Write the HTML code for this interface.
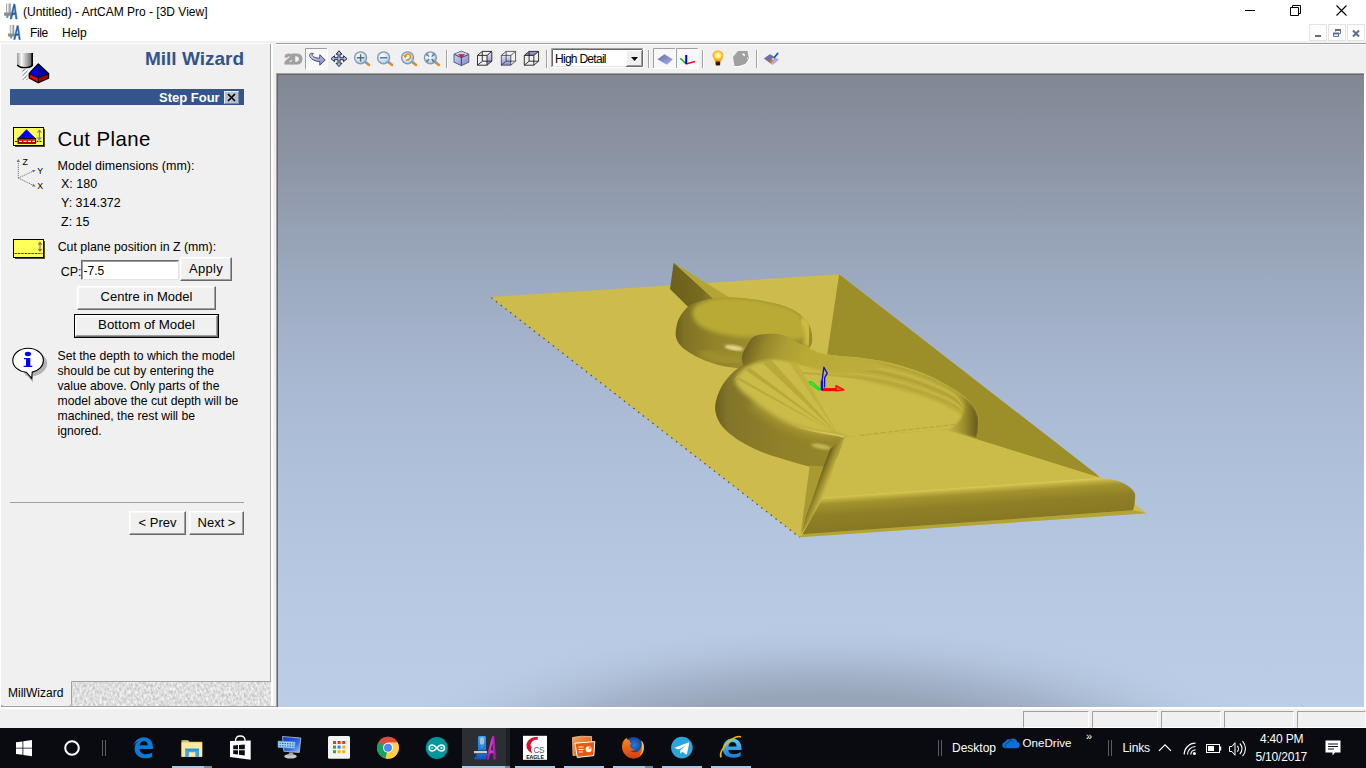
<!DOCTYPE html>
<html>
<head>
<meta charset="utf-8">
<title>(Untitled) - ArtCAM Pro - [3D View]</title>
<style>
*{box-sizing:border-box;margin:0;padding:0}
html,body{width:1366px;height:768px;overflow:hidden;background:#fff}
body{position:relative;font-family:"Liberation Sans",Arial,sans-serif;font-size:12px;color:#000}
.abs{position:absolute}
.t{position:absolute;white-space:nowrap;line-height:1}
/* title + menu */
#titlebar{left:0;top:0;width:1366px;height:22px;background:#fff}
#menubar{left:0;top:22px;width:1366px;height:21px;background:#fff}
.mdi{top:2px;width:18px;height:17px;border:1px solid #e3e3e3;background:#fdfdfd}
/* left panel */
#panel{left:0;top:43px;width:270px;height:664px;background:#f0f0f0}
#stepbar{left:10px;top:89px;width:234px;height:16px;background:#33558b}
.btn{position:absolute;background:#f0f0f0;border:1px solid;border-color:#fff #696969 #696969 #fff;box-shadow:inset -1px -1px 0 #a0a0a0,inset 1px 1px 0 #f8f8f8;font-size:13px;text-align:center;white-space:nowrap}
/* viewport */
#toolbar{left:271px;top:43px;width:1095px;height:31px;background:#f0f0f0}
#view{left:278px;top:75px;width:1086px;height:632px;background:linear-gradient(#828794 0%,#8c94a4 13%,#98a5b9 28%,#a1afc6 38%,#a8b8d1 48%,#aebfd9 60%,#b6c8e2 80%,#bccee7 100%);overflow:hidden}
#statusbar{left:0;top:709px;width:1366px;height:19px;background:#f0f0f0}
.sp{position:absolute;top:2px;height:17px;border:1px solid;border-color:#a0a0a0 #fff #fff #a0a0a0}
.ul{position:absolute;top:38px;height:2px;width:40px;background:#9dcdea}.ul2{position:absolute;top:38px;height:2px;width:8px;background:#6f8ea3}.w{color:#fff}
#taskbar{left:0;top:728px;width:1366px;height:40px;background:#090b10}
</style>
</head>
<body>

<!-- title bar -->
<div id="titlebar" class="abs">
<svg class="abs" style="left:3px;top:3px" width="17" height="17" viewBox="0 0 17 17">
<defs><linearGradient id="cy1" x1="0" x2="1"><stop offset="0" stop-color="#8a8a8a"/><stop offset=".35" stop-color="#f4f4f4"/><stop offset="1" stop-color="#7a7a7a"/></linearGradient></defs>
<rect x="3" y="0.500" width="4.600" height="9.500" fill="url(#cy1)"/>
<path d="M1 9.5h7v3.2h-2.2l-.8 2.3h-1.5l-.5-2.3h-2z" fill="#8c8c8c"/>
<path d="M7 16 L10.6 1.2 L12 1 L14.2 16 L12.6 16 L12.2 11.5 L9.6 12 L8.6 16z M10 10 L12 9.6 L11.2 4.4z" fill="#1f5da8" fill-rule="evenodd" stroke="#2a6ab8" stroke-width=".5"/>
</svg>
<div class="t" style="left:23px;top:6px;font-size:12px">(Untitled) - ArtCAM Pro - [3D View]</div>
<svg class="abs" style="left:1240px;top:0" width="126" height="22" viewBox="0 0 126 22" fill="none" stroke="#000" stroke-width="1">
<path d="M5 10.5h10"/>
<path d="M50.5 7.500h8v8h-8z"/><path d="M52.500 7.500v-2h8v8h-2"/>
<path d="M96.500 5.500l10 10M106.500 5.500l-10 10" stroke-width="1.1"/>
</svg>
</div>
<!-- menu bar -->
<div id="menubar" class="abs">
<svg class="abs" style="left:7px;top:2px" width="16" height="17" viewBox="0 0 17 17">
<rect x="3" y="0.500" width="4.600" height="9.500" fill="url(#cy1)"/>
<path d="M1 9.500h7v3.200h-2.200l-.8 2.300h-1.500l-.5-2.300h-2z" fill="#8c8c8c"/>
<path d="M7 16 L10.600 1.200 L12 1 L14.200 16 L12.600 16 L12.200 11.500 L9.600 12 L8.600 16z M10 10 L12 9.600 L11.200 4.400z" fill="#1f5da8" fill-rule="evenodd" stroke="#2a6ab8" stroke-width=".5"/>
</svg>
<div class="t" style="left:30px;top:5px;font-size:12px;letter-spacing:-.4px">File</div>
<div class="t" style="left:62px;top:5px;font-size:12px">Help</div>
<div class="abs mdi" style="left:1309px"><i style="left:5px;top:10px;width:6px;height:2px;background:#5d6f8a;position:absolute"></i></div>
<div class="abs mdi" style="left:1328px"><svg width="17" height="17" viewBox="0 0 17 17" fill="none" stroke="#5d6f8a"><path d="M6.500 6.500v-2h5v4h-1.500" stroke-width="1"/><path d="M6 5h6" stroke-width="2"/><path d="M4.500 8.500h5v3h-5z"/><path d="M4 8.500h6" stroke-width="2"/></svg></div>
<div class="abs mdi" style="left:1347px"><svg width="17" height="17" viewBox="0 0 17 17" fill="none" stroke="#5d6f8a" stroke-width="2"><path d="M5 5.500l6 6M11 5.500l-6 6"/></svg></div>
</div>

<!-- left panel -->
<div class="abs" style="left:0;top:41px;width:1366px;height:2px;background:#f0f0f0"></div>
<div id="panel" class="abs"></div>
<svg class="abs" style="left:14px;top:50px" width="40" height="36" viewBox="14 50 40 36">
<defs>
<linearGradient id="cyl" x1="0" x2="1"><stop offset="0" stop-color="#9a9a9a"/><stop offset=".28" stop-color="#fafafa"/><stop offset=".62" stop-color="#a8a8a8"/><stop offset=".9" stop-color="#6a6a6a"/><stop offset=".91" stop-color="#000"/><stop offset="1" stop-color="#000"/></linearGradient>
<pattern id="hat" width="3" height="3" patternUnits="userSpaceOnUse" patternTransform="rotate(-45)"><rect width="3" height="3" fill="#fff"/><rect width="3" height="1" fill="#8a8a8a"/></pattern>
</defs>
<path d="M17 53h16v12.500q-2 2.400-8 2.400t-8-2.400z" fill="url(#cyl)"/>
<path d="M17.300 65q2 2.600 7.700 2.600t7.700-2.600" fill="none" stroke="#000" stroke-width="1.300"/>
<rect x="22.500" y="69" width="5" height="11" fill="url(#hat)"/>
<path d="M38.300 64 L29.300 73.500 L29.300 78 L38.300 82.700 L48.500 78 L48.500 73.500z" fill="#000" stroke="#000" stroke-width="1.400" stroke-linejoin="round"/>
<path d="M38.300 64.600 L30 73.600 L38.300 77.400z" fill="#0000f0"/>
<path d="M38.300 64.600 L47.800 73.600 L38.300 77.400z" fill="#0000a0"/>
<path d="M30 74.600 L37.800 78.200 L37.800 82 L30 77.800z" fill="#f00000"/>
<path d="M38.800 78.200 L47.800 74.600 L47.800 77.800 L38.800 82z" fill="#a00000"/>
</svg>
<div class="t" style="left:100px;width:144px;text-align:right;top:49px;font-size:19px;font-weight:bold;color:#31548b">Mill Wizard</div>
<div id="stepbar" class="abs"></div>
<div class="t" style="left:159px;top:91px;font-size:13px;font-weight:bold;color:#fff">Step Four</div>
<div class="abs" style="left:224px;top:91px;width:15px;height:13px;background:#b3bfd3;border:1px solid;border-color:#e8ecf3 #7d8aa3 #7d8aa3 #e8ecf3"></div>
<svg class="abs" style="left:224px;top:91px" width="15" height="13" viewBox="0 0 15 13"><path d="M4 3l7 7M11 3l-7 7" stroke="#000" stroke-width="1.700" fill="none"/></svg>

<!-- cut plane icon -->
<svg class="abs" style="left:13px;top:127px" width="33" height="21" viewBox="13 127 33 21">
<rect x="15" y="129" width="30" height="18" fill="#4a4a4a"/>
<rect x="13.500" y="127.500" width="30" height="18" fill="#ffff5a" stroke="#000"/>
<path d="M26.500 129.300 L35.800 138.400 L17.700 138.400z" fill="#0000f8"/>
<rect x="18" y="138.400" width="17.600" height="4.800" fill="#f00" stroke="#000" stroke-width="1"/>
<path d="M15 141.400h2.500M36.500 141.400h6" stroke="#0000c0" stroke-width="1" stroke-dasharray="2 1"/>
<path d="M19 141.300h16" stroke="#fff" stroke-width="1.200" stroke-dasharray="3 1.500"/>
<path d="M39.400 131v8M37.400 132.600l2-2.400 2 2.400M37.400 137.400l2 2.400 2-2.400" stroke="#808080" stroke-width="1.100" fill="none"/>
</svg>
<div class="t" style="left:57.500px;top:129.400px;font-size:20.400px;letter-spacing:.4px">Cut Plane</div>
<!-- xyz icon -->
<svg class="abs" style="left:14px;top:156px" width="34" height="36" viewBox="14 156 34 36">
<g stroke="#777" stroke-width="1" fill="none" stroke-dasharray="1.200 0.800"><path d="M18.300 178V160M18.300 178L34.500 170.600M18.300 178L34.500 186"/></g>
<path d="M16.500 162l1.800-3 1.800 3zM32 170l3.800 0-2.600 2.600zM32 186.600l3.800 0-2.400-2.800z" fill="#777"/>
<g font-family="'Liberation Sans',Arial,sans-serif" font-size="8.800" fill="#000"><text x="22.500" y="164.800">Z</text><text x="37.300" y="173.800">Y</text><text x="37.300" y="188.600">X</text></g>
</svg>
<div class="t" style="left:57.600px;top:160.200px;font-size:12.500px">Model dimensions (mm):</div>
<div class="t" style="left:61px;top:178.200px;font-size:12.500px">X: 180</div>
<div class="t" style="left:61px;top:197.400px;font-size:12.500px">Y: 314.372</div>
<div class="t" style="left:61px;top:216.200px;font-size:12.500px">Z: 15</div>
<!-- yellow z icon -->
<svg class="abs" style="left:13px;top:239px" width="33" height="21" viewBox="13 239 33 21">
<rect x="15" y="241" width="30" height="18" fill="#4a4a4a"/>
<rect x="13.500" y="239.500" width="30" height="18" fill="#ffff5a" stroke="#000"/>
<path d="M14.500 253.500h28" stroke="#f00" stroke-width="1.100" stroke-dasharray="2.400 1"/>
<path d="M40 243v7.500M38.300 244.600l1.700-2.200 1.700 2.200M38.300 249l1.700 2.200 1.700-2.200" stroke="#707070" stroke-width="1.100" fill="none"/>
</svg>
<div class="t" style="left:57.700px;top:241.300px;font-size:12.350px">Cut plane position in Z (mm):</div>
<div class="t" style="left:60.700px;top:266.400px;font-size:12.500px">CP:</div>
<div class="abs" style="left:81px;top:260px;width:98px;height:20px;background:#fff;border:1px solid;border-color:#696969 #e3e3e3 #e3e3e3 #696969;box-shadow:inset 1px 1px 0 #a0a0a0"></div>
<div class="t" style="left:83.500px;top:265.300px;font-size:12px">-7.5</div>
<div class="btn" style="left:180px;top:257px;width:52px;height:24px"><span class="t" style="left:0;width:50px;top:3.600px;letter-spacing:.3px">Apply</span></div>
<div class="btn" style="left:77px;top:286px;width:139px;height:24px"><span class="t" style="left:0;width:137px;top:3.200px">Centre in Model</span></div>
<div class="abs" style="left:74px;top:314px;width:145px;height:24px;background:#000"></div>
<div class="btn" style="left:75px;top:315px;width:143px;height:22px"><span class="t" style="left:0;width:141px;top:2px;font-size:13.300px">Bottom of Model</span></div>
<!-- info icon -->
<svg class="abs" style="left:10px;top:345px" width="40" height="38" viewBox="10 345 40 38">
<defs><pattern id="sh" width="2" height="2" patternUnits="userSpaceOnUse"><rect width="2" height="2" fill="#f0f0f0"/><rect width="1" height="1" fill="#777"/><rect x="1" y="1" width="1" height="1" fill="#777"/></pattern></defs>
<path d="M30.200 349.800a15.300 12.200 0 0 1 10 21.400q-4.500 3.200-9 3.600v6.200l-5.500-6.500q-8-1.500 4.500-24.700z" fill="url(#sh)" transform="translate(1.800,1.600)"/>
<path d="M28.100 348.200c8.400 0 15.300 5.400 15.300 12.200c0 5.600-4.600 10.200-11.200 11.700l-0.500 6.300l-5.200-6c-7.800-.8-13.700-5.800-13.700-12c0-6.800 6.900-12.200 15.300-12.200z" fill="#fff" stroke="#000" stroke-width="1.100"/>
<ellipse cx="27.900" cy="354" rx="3.100" ry="2.200" fill="#0000ff"/>
<path d="M24 358h6.300v7.800h2v1.300h-8.700v-1.300h2.400v-6.500h-2z" fill="#0000ff"/>
</svg>
<div class="abs" style="left:57.500px;top:349.200px;width:200px;font-size:12.200px;line-height:15px">Set the depth to which the model<br>should be cut by entering the<br>value above. Only parts of the<br>model above the cut depth will be<br>machined, the rest will be<br>ignored.</div>
<div class="abs" style="left:10px;top:502px;width:234px;height:1px;background:#a0a0a0"></div>
<div class="btn" style="left:129px;top:511px;width:57px;height:24px"><span class="t" style="left:0;width:55px;top:3.600px">&lt; Prev</span></div>
<div class="btn" style="left:189px;top:511px;width:55px;height:24px"><span class="t" style="left:0;width:53px;top:3.600px">Next &gt;</span></div>
<!-- bottom tabs -->
<div class="abs" style="left:0;top:681px;width:271px;height:26px;background:#dadada"></div>
<svg class="abs" style="left:0;top:681px" width="271" height="27" viewBox="0 0 271 27">
<defs><filter id="nz" x="0" y="0" width="100%" height="100%" color-interpolation-filters="sRGB"><feTurbulence type="fractalNoise" baseFrequency="0.45 0.3" numOctaves="2" seed="7"/><feColorMatrix type="matrix" values="0.36 0 0 0 0.69  0.36 0 0 0 0.69  0.36 0 0 0 0.69  0 0 0 0 1"/></filter></defs>
<rect x="71" y="1" width="199" height="25" fill="#e9e9e9"/>
<rect x="71" y="1" width="200" height="25" filter="url(#nz)"/>
<path d="M71.500 0.500H270.500" stroke="#a0a0a0"/>
<path d="M0 0h71.500v22.500q0 3-3 3h-64.500q-3 0-4-3z" fill="#f0f0f0"/>
<path d="M71.500 0.500v22q0 3-3 3h-64.500q-3 0-3.500-2.500" fill="none" stroke="#a0a0a0"/>
<path d="M0 25.500H271" stroke="#a0a0a0"/>
</svg>
<div class="t" style="left:8px;top:686.600px;font-size:12px">MillWizard</div>
<div class="abs" style="left:270px;top:44px;width:1px;height:638px;background:#a0a0a0"></div>
<div class="abs" style="left:0;top:43px;width:270px;height:1px;background:#fff"></div>
<div class="abs" style="left:0;top:43px;width:1px;height:664px;background:#fff"></div>

<!-- toolbar -->
<div id="toolbar" class="abs"></div>
<div class="abs" style="left:276px;top:43px;width:1090px;height:1px;background:#a0a0a0"></div>
<div class="abs" style="left:276px;top:44px;width:1090px;height:1px;background:#fff"></div>
<div class="abs" style="left:271px;top:44px;width:2px;height:663px;background:#fff"></div><div class="abs" style="left:273px;top:44px;width:3px;height:663px;background:#f0f0f0"></div><div class="abs" style="left:270px;top:706px;width:8px;height:1px;background:#a0a0a0"></div>
<svg class="abs" style="left:276px;top:45px" width="520" height="28" viewBox="276 45 520 28">
<defs>
<linearGradient id="lav" x1="0" y1="0" x2="1" y2="1"><stop offset="0" stop-color="#d8dcf8"/><stop offset="1" stop-color="#8088c8"/></linearGradient>
<linearGradient id="lav2" x1="0" y1="0" x2="0" y2="1"><stop offset="0" stop-color="#e0e4fa"/><stop offset="1" stop-color="#8890d0"/></linearGradient>
<radialGradient id="lens" cx=".4" cy=".35" r=".7"><stop offset="0" stop-color="#ffffff"/><stop offset=".6" stop-color="#c8e4f4"/><stop offset="1" stop-color="#8fb8d8"/></radialGradient>
<radialGradient id="bulb" cx=".5" cy=".45" r=".55"><stop offset="0" stop-color="#fff"/><stop offset=".45" stop-color="#ffe860"/><stop offset="1" stop-color="#f49000"/></radialGradient>
<linearGradient id="dia" x1="0" y1="0" x2="1" y2="1"><stop offset="0" stop-color="#6070b0"/><stop offset="1" stop-color="#a8b0e0"/></linearGradient>
<g id="mag"><path d="M5.800 5l2.600 2.100" stroke="#e88a20" stroke-width="2.600" stroke-linecap="round"/><path d="M3.500 3.400l2.800 2.200" stroke="#8898a8" stroke-width="2.200"/><circle cx="0" cy="0" r="6" fill="url(#lens)" stroke="#8098b8" stroke-width="1.300"/></g>
</defs>
<!-- 2D disabled -->
<text x="284.500" y="64.400" font-family="'Liberation Sans',Arial,sans-serif" font-weight="bold" font-size="15.500" fill="#fff" letter-spacing="-1.800" stroke="#fff" stroke-width="1" transform="translate(1,0)">2D</text>
<text x="284.500" y="63.600" font-family="'Liberation Sans',Arial,sans-serif" font-weight="bold" font-size="15.500" fill="#a0a0a0" letter-spacing="-1.800" stroke="#a0a0a0" stroke-width="1.200">2D</text>
<!-- pressed rotate -->
<rect x="305" y="48" width="23" height="21.500" fill="#f8f8f8"/>
<path d="M305.500 69.500v-21h22.500" fill="none" stroke="#a0a0a0"/><path d="M305.500 69h22v-21" fill="none" stroke="#fff"/>
<path d="M311.800 53.200c-2 0-2.800 1.800-1.800 3.600c1.600 3 5.500 4.600 9.800 4.800v3.600l5.400-5.200l-5.400-5.300v3.500c-3.400 0-6.600-1-7.600-2.800c-.5-1 .2-1.800 1.200-1.700z" fill="url(#lav)" stroke="#384058" stroke-width=".9" stroke-linejoin="round"/>
<!-- pan -->
<path d="M339 50.800l3 3.400h-2v3.500h3.500v-2l3.500 3l-3.500 3v-2h-3.500v3.500h2l-3 3.400l-3-3.400h2v-3.500h-3.500v2l-3.500-3l3.500-3v2h3.500v-3.500h-2z" fill="#b0b6e6" stroke="#203040" stroke-width="1" stroke-linejoin="round"/>
<!-- zoom in -->
<use href="#mag" x="360.600" y="57.800"/><path d="M357 57.800h7.200M360.600 54.200v7.200" stroke="#606870" stroke-width="1.400"/>
<!-- zoom out -->
<use href="#mag" x="383.600" y="57.800"/><path d="M380 57.800h7.200" stroke="#606870" stroke-width="1.400"/>
<!-- zoom prev -->
<use href="#mag" x="407.600" y="57.800"/><path d="M405 56.500c.5-3 5-3.500 5.600-.5c.5 2.600-2.500 4.500-4.600 4" fill="none" stroke="#e09010" stroke-width="1.500"/><path d="M403.200 55l2 3.600l2.200-3z" fill="#e09010"/>
<!-- zoom fit -->
<use href="#mag" x="430.400" y="57.800"/><path d="M427 54.400l2.200 2.200M433.800 54.400l-2.200 2.200M427 61.200l2.200-2.200M433.800 61.200l-2.200-2.200" stroke="#687078" stroke-width="1.300"/><path d="M426.400 53.800h2.400l-2.400 2.400zM434.400 53.800h-2.400l2.400 2.400zM426.400 61.800h2.400l-2.400-2.400zM434.400 61.800h-2.400l2.400-2.400z" fill="#687078"/>
<path d="M446.500 50v18M546.500 50v18M648.500 50v18M702.500 50v18M756.500 50v18" stroke="#a0a0a0"/><path d="M447.500 50v18M547.500 50v18M649.500 50v18M703.500 50v18M757.500 50v18" stroke="#fff"/>
<!-- iso cube -->
<path d="M454 54.200l7.400-3.100l7.400 3.100v8l-7.400 3.400l-7.400-3.400z" fill="url(#lav)" stroke="#586088" stroke-width="1" stroke-linejoin="round"/>
<path d="M454.300 54.400l7.100 3.200l7.100-3.200l-7.100-3z" fill="#c8ccf0"/>
<path d="M458 54.200h7l-3.600 3.600z" fill="#f01020"/>
<path d="M461.400 57.600v7.800M454.200 54.400l7.200 3.200l7.200-3.200" fill="none" stroke="#303850" stroke-width=".9"/>
<!-- cube 2 right face -->
<path d="M487 55.400l4.800-4v9.800l-4.800 4z" fill="url(#lav2)"/>
<g fill="none" stroke="#202020" stroke-width=".9"><path d="M477.500 55.400h9.500v9.800h-9.500zM482.300 51.400h9.500v9.800h-9.500zM477.500 55.400l4.800-4M487 55.400l4.800-4M477.500 65.200l4.800-4M487 65.200l4.800-4"/></g>
<!-- cube 3 front face -->
<path d="M501.300 55.400h9.500v9.800h-9.500z" fill="url(#lav2)"/>
<g fill="none" stroke="#202020" stroke-width=".9"><path d="M501.300 55.400h9.500v9.800h-9.500zM506.100 51.400h9.500v9.800h-9.500zM501.300 55.400l4.800-4M510.800 55.400l4.800-4M501.300 65.200l4.800-4M510.800 65.200l4.800-4" opacity=".75"/></g>
<!-- cube 4 top face -->
<path d="M524.300 55.400l4.800-4h9.500l-4.800 4z" fill="url(#lav2)"/><path d="M524.300 55.400l4.800-4h9.500l-4.800 4z" fill="#5060a0" opacity=".45"/>
<g fill="none" stroke="#202020" stroke-width=".9"><path d="M524.300 55.400h9.500v9.800h-9.500zM529.100 51.400h9.500v9.800h-9.500zM524.300 55.400l4.800-4M533.800 55.400l4.800-4M524.300 65.200l4.800-4M533.800 65.200l4.800-4"/></g>
<!-- combo -->
<rect x="551" y="48" width="92.500" height="19.500" fill="#fff"/>
<path d="M551.500 67v-18.500h91.500" fill="none" stroke="#a0a0a0"/><path d="M552.500 66v-16.500h90" fill="none" stroke="#696969"/>
<path d="M551 67.500h92.500v-19.500" fill="none" stroke="#fff"/><path d="M552 66.500h90.500v-17" fill="none" stroke="#e3e3e3"/>
<rect x="626" y="50" width="16" height="16" fill="#f0f0f0"/>
<path d="M626.500 65.500v-15h15" fill="none" stroke="#fff"/><path d="M626 66.500h16.500v-16.500" fill="none" stroke="#696969"/><path d="M627 65.500h14.500v-14.500" fill="none" stroke="#a0a0a0"/>
<path d="M631 57h7l-3.500 4z" fill="#000"/>
<text x="555" y="62.700" font-family="'Liberation Sans',Arial,sans-serif" font-size="12" letter-spacing="-.72" fill="#000">High Detail</text>
<!-- pressed pair -->
<rect x="653" y="48" width="45" height="21" fill="#f8f8f8"/>
<path d="M653.500 69v-20.500h22M676.500 69v-20.500h21.500" fill="none" stroke="#a0a0a0"/><path d="M653 68.500h22.500v-20M676 68.500h22v-20" fill="none" stroke="#fff"/>
<path d="M657.400 59.200l7-5l8.500 5l-6 5.600z" fill="url(#dia)"/>
<path d="M680.200 58.300l6 5.600" stroke="#00c020" stroke-width="1.500"/><path d="M686 64l9-2.500" stroke="#f01010" stroke-width="1.500"/><path d="M686.200 55v9" stroke="#0000e0" stroke-width="2"/>
<!-- bulb -->
<path d="M718 50.600c3.200 0 5.400 2.300 5.400 5c0 2.400-1.800 3.400-2.400 5.600h-6c-.6-2.200-2.400-3.200-2.400-5.600c0-2.700 2.200-5 5.400-5z" fill="url(#bulb)"/>
<rect x="715.600" y="61.200" width="4.600" height="4.200" rx=".8" fill="#3a1000"/><rect x="715.600" y="61" width="4.600" height="1.200" fill="#b85000"/>
<!-- gray disabled -->
<path d="M738 51h9.500l1.500 7.500l-3.500 5.500l-6.500 2h-4.500l-1.500-9z" fill="#fff" transform="translate(1,1)"/>
<path d="M738 51h9.500l1.500 7.500l-3.500 5.500l-6.500 2h-4.500l-1.500-9z" fill="#a0a0a0"/>
<path d="M742.500 54.500l2 1.200l-.5-2zM747 58l1.500 1" stroke="#fff" stroke-width="1" fill="#fff"/>
<!-- brush -->
<path d="M764 58.600l6-4.400l9 5.500l-6.500 5.200z" fill="#a4acec"/><path d="M764 58.600l6-4.400l4.500 2.700l-5 5.500z" fill="#6872a8"/>
<path d="M777.700 53.400l-4.600 5.600" stroke="#1858d0" stroke-width="1.700" stroke-linecap="round"/><path d="M773.300 58.600l-3 3.600" stroke="#f07010" stroke-width="2.200" stroke-linecap="round"/><path d="M773.600 58.200l-1.200 1.500" stroke="#f8e0b0" stroke-width="1.600"/>
</svg>

<!-- viewport -->
<div class="abs" style="left:276px;top:73px;width:1089px;height:635px;background:#fff"></div>
<div class="abs" style="left:276px;top:73px;width:1088px;height:634px;background:#a0a0a0"></div>
<div class="abs" style="left:277px;top:74px;width:1087px;height:633px;background:#696969"></div>
<div id="view" class="abs">
<svg class="abs" style="left:0;top:0" width="1086" height="632" viewBox="278 75 1086 632">
<defs>
<radialGradient id="gsh" cx="826" cy="770" r="475" gradientUnits="userSpaceOnUse" gradientTransform="translate(0,770) scale(1,.316) translate(0,-770)"><stop offset="0" stop-color="#95a2b6" stop-opacity="1"/><stop offset=".5" stop-color="#96a3b7" stop-opacity=".95"/><stop offset=".64" stop-color="#9aa8bd" stop-opacity=".72"/><stop offset=".78" stop-color="#a2b1c8" stop-opacity=".4"/><stop offset=".9" stop-color="#acbcd4" stop-opacity=".13"/><stop offset=".98" stop-color="#b6c7e0" stop-opacity="0"/></radialGradient>
<linearGradient id="gfin" x1="672" y1="285" x2="712" y2="280" gradientUnits="userSpaceOnUse"><stop offset="0" stop-color="#6c601d"/><stop offset=".7" stop-color="#786b21"/><stop offset="1" stop-color="#93852a"/></linearGradient>
<linearGradient id="gw1" x1="676" y1="0" x2="745" y2="0" gradientUnits="userSpaceOnUse"><stop offset="0" stop-color="#6e621e"/><stop offset=".12" stop-color="#7f7225"/><stop offset=".55" stop-color="#918329"/><stop offset="1" stop-color="#9a8c2c"/></linearGradient>
<linearGradient id="gw2" x1="715" y1="0" x2="845" y2="0" gradientUnits="userSpaceOnUse"><stop offset="0" stop-color="#6a5f1d"/><stop offset=".1" stop-color="#82752a"/><stop offset=".5" stop-color="#8f8129"/><stop offset=".85" stop-color="#93852a"/><stop offset="1" stop-color="#9a8c2c"/></linearGradient>
<linearGradient id="gneck" x1="743" y1="352" x2="860" y2="393" gradientUnits="userSpaceOnUse"><stop offset="0" stop-color="#6c611e"/><stop offset=".05" stop-color="#7c6f23"/><stop offset=".15" stop-color="#96882b"/><stop offset=".3" stop-color="#ac9e33"/><stop offset=".5" stop-color="#b9aa35"/><stop offset=".8" stop-color="#bbac3a"/><stop offset="1" stop-color="#bcad3c"/></linearGradient>
<linearGradient id="gbev" x1="823" y1="497" x2="825.500" y2="533.500" gradientUnits="userSpaceOnUse"><stop offset="0" stop-color="#dccc5c"/><stop offset=".07" stop-color="#c4b444"/><stop offset=".2" stop-color="#a2932e"/><stop offset=".5" stop-color="#8f8027"/><stop offset="1" stop-color="#867823"/></linearGradient>
<linearGradient id="gfil" x1="821.500" y1="470" x2="832" y2="474.300" gradientUnits="userSpaceOnUse"><stop offset="0" stop-color="#5c5219"/><stop offset=".18" stop-color="#7d7023"/><stop offset=".5" stop-color="#9c8e2c"/><stop offset=".85" stop-color="#bcad3e"/><stop offset="1" stop-color="#c9b947"/></linearGradient>
<linearGradient id="grw" x1="950" y1="0" x2="979" y2="0" gradientUnits="userSpaceOnUse"><stop offset="0" stop-color="#c0b040"/><stop offset=".5" stop-color="#9a8c2c"/><stop offset="1" stop-color="#5e5419"/></linearGradient>
<linearGradient id="grim" x1="785" y1="0" x2="845" y2="0" gradientUnits="userSpaceOnUse"><stop offset="0" stop-color="#d8c85a" stop-opacity="0"/><stop offset=".5" stop-color="#d8c85a" stop-opacity=".8"/><stop offset="1" stop-color="#dccc5e"/></linearGradient>
</defs>
<rect x="278" y="590" width="1086" height="117" fill="url(#gsh)"/>
<!--MODEL-START-->
<defs><clipPath id="cbig"><path d="M745.0 363.5C743.0 365.0 736.6 368.8 732.9 372.4C729.1 376.0 725.2 380.6 722.5 385.0C719.8 389.4 717.7 394.7 716.5 399.0C715.3 403.3 714.9 406.9 715.3 410.6C715.7 414.4 717.3 418.3 719.0 421.5C720.7 424.7 722.6 427.0 725.4 429.8C728.2 432.6 732.1 435.8 736.0 438.5C739.9 441.2 744.3 443.6 748.8 445.9C753.3 448.2 758.1 450.6 763.0 452.5C767.9 454.4 772.9 456.0 778.1 457.6C783.3 459.2 788.8 460.8 794.0 462.3C799.2 463.8 804.1 465.5 809.3 466.4C814.5 467.3 822.4 467.4 825.0 467.6L836.7 458.6L844.9 437.1L945.6 429.5L976.9 438.4L976.9 438.4C977.2 436.6 978.5 431.4 978.6 427.5C978.7 423.6 979.0 419.2 977.7 415.0C976.4 410.8 974.4 406.7 970.6 402.5C966.8 398.3 962.8 394.8 955.0 390.0C947.2 385.2 934.2 378.0 923.8 373.6C913.4 369.2 902.9 366.0 892.5 363.4C882.1 360.8 870.0 359.2 861.3 358.0C852.5 356.8 846.8 356.8 840.0 356.0C833.2 355.2 824.0 353.8 820.8 353.4L800.0 345.0L760.0 345.0L745.0 363.5z"/></clipPath><filter id="b2" x="-10%" y="-10%" width="120%" height="120%"><feGaussianBlur stdDeviation="2.2"/></filter><filter id="b1" x="-10%" y="-10%" width="120%" height="120%"><feGaussianBlur stdDeviation="1.2"/></filter><filter id="b4" x="-20%" y="-20%" width="140%" height="140%"><feGaussianBlur stdDeviation="4"/></filter></defs>
<g id="model">
<path d="M490.9 297.1L839.1 274.3L1146.7 513.3L799.6 537.3z" fill="#cdbc4b"/>
<path d="M491.2 297.6L799.6 537.3" stroke="#5f5418" stroke-width="1.200" stroke-dasharray="1.600 4.400" fill="none"/>
<path d="M799.6 537.3L802.4 534.3L1133.0 510.3L1146.7 513.3z" fill="#b4a435"/>
<path d="M839.1 274.3L827.3 354.0L840.0 400.0L945.6 429.5L1099.4 477.6L1096.3 473.9z" fill="#9c8e29"/>
<path d="M673.700 262.800L670 288.900L688.200 306.900L713.200 298.500z" fill="url(#gfin)"/>
<path d="M673.700 262.800L713.200 298.500L729 297.200z" fill="#b3a434"/>
<clipPath id="csm"><path d="M688.3 306.6C691.7 304.0 695.9 302.7 700.0 301.3C704.1 299.9 708.5 299.1 713.2 298.5C717.9 297.9 723.2 297.6 728.0 297.5C732.8 297.4 736.5 297.6 742.2 298.1C747.9 298.7 755.4 299.6 762.0 300.8C768.6 302.0 776.1 303.5 781.8 305.3C787.5 307.1 792.0 309.1 796.0 311.5C800.0 313.9 803.1 317.1 805.5 319.8C807.9 322.6 809.4 325.1 810.5 328.0C811.6 330.9 812.2 333.9 812.2 337.0C812.2 340.1 812.7 343.5 810.2 346.8C807.7 350.1 803.7 353.8 797.0 357.0C790.3 360.2 778.2 364.1 770.0 366.0C761.8 367.9 753.6 368.2 748.0 368.5C742.4 368.8 741.2 368.4 736.4 367.9C731.6 367.3 725.4 366.8 719.3 365.2C713.1 363.6 705.6 361.0 699.5 358.0C693.4 355.0 686.3 350.8 682.4 347.4C678.5 344.0 677.1 341.0 676.1 337.6C675.1 334.2 675.8 330.4 676.4 327.0C677.0 323.6 677.8 320.5 679.8 317.1C681.8 313.7 684.9 309.2 688.3 306.6z"/></clipPath>
<path d="M688.3 306.6C691.7 304.0 695.9 302.7 700.0 301.3C704.1 299.9 708.5 299.1 713.2 298.5C717.9 297.9 723.2 297.6 728.0 297.5C732.8 297.4 736.5 297.6 742.2 298.1C747.9 298.7 755.4 299.6 762.0 300.8C768.6 302.0 776.1 303.5 781.8 305.3C787.5 307.1 792.0 309.1 796.0 311.5C800.0 313.9 803.1 317.1 805.5 319.8C807.9 322.6 809.4 325.1 810.5 328.0C811.6 330.9 812.2 333.9 812.2 337.0C812.2 340.1 812.7 343.5 810.2 346.8C807.7 350.1 803.7 353.8 797.0 357.0C790.3 360.2 778.2 364.1 770.0 366.0C761.8 367.9 753.6 368.2 748.0 368.5C742.4 368.8 741.2 368.4 736.4 367.9C731.6 367.3 725.4 366.8 719.3 365.2C713.1 363.6 705.6 361.0 699.5 358.0C693.4 355.0 686.3 350.8 682.4 347.4C678.5 344.0 677.1 341.0 676.1 337.6C675.1 334.2 675.8 330.4 676.4 327.0C677.0 323.6 677.8 320.5 679.8 317.1C681.8 313.7 684.9 309.2 688.3 306.6z" fill="url(#gw1)"/>
<g clip-path="url(#csm)"><path d="M696.0 305.5C697.8 304.1 701.1 302.6 704.0 301.5C706.9 300.4 709.2 299.2 713.2 298.6C717.2 298.0 723.2 297.7 728.0 297.6C732.8 297.5 736.5 297.6 742.2 298.2C747.9 298.8 755.4 299.7 762.0 300.9C768.6 302.1 776.3 303.7 781.8 305.4C787.3 307.1 791.4 309.0 795.0 311.3C798.6 313.6 801.4 316.5 803.5 319.3C805.6 322.1 807.0 325.3 807.5 328.0C808.0 330.7 808.1 333.6 806.5 335.5C804.9 337.4 802.4 339.0 798.0 339.5C793.6 340.0 786.0 339.1 780.0 338.6C774.0 338.1 767.8 336.8 762.0 336.5C756.2 336.2 750.8 337.2 745.0 337.0C739.2 336.8 732.7 336.0 727.0 335.0C721.3 334.0 715.7 332.7 711.0 331.0C706.3 329.3 702.0 327.3 699.0 325.0C696.0 322.7 694.0 319.5 693.0 317.0C692.0 314.5 692.5 311.9 693.0 310.0C693.5 308.1 694.2 306.9 696.0 305.5z" fill="#b9aa35" filter="url(#b2)"/>
<path d="M700 352Q722 362 742 361" stroke="#a89a30" stroke-width="9" fill="none" filter="url(#b4)" opacity=".8"/>
<ellipse cx="734" cy="347.800" rx="9.500" ry="2.600" fill="#e2d68e" filter="url(#b1)" transform="rotate(9 734 347.8)"/>
<path d="M802 318Q812 330 806 346" stroke="#d6c74a" stroke-width="6" fill="none" filter="url(#b2)" opacity=".95"/></g>
<g clip-path="url(#cbig)">
<rect x="700" y="340" width="300" height="140" fill="url(#gw2)"/>
<path d="M752.7 400.0C754.8 401.6 760.6 406.4 765.0 409.5C769.4 412.6 774.5 416.0 779.0 418.5C783.5 421.0 787.6 422.8 792.0 424.5C796.4 426.2 800.7 427.7 805.4 429.0C810.1 430.3 815.0 431.3 820.0 432.2C825.0 433.1 833.1 433.9 835.7 434.3" stroke="#a99b32" stroke-width="14" fill="none" filter="url(#b4)" opacity=".75"/>
<path d="M771.0 359.2C768.0 359.9 758.0 361.0 752.7 363.2C747.5 365.4 742.5 369.4 739.5 372.4C736.5 375.4 734.8 378.0 735.0 381.0C735.2 384.0 738.0 387.3 741.0 390.5C744.0 393.7 748.7 396.8 752.7 400.0C756.7 403.2 760.6 406.4 765.0 409.5C769.4 412.6 774.5 416.0 779.0 418.5C783.5 421.0 787.6 422.8 792.0 424.5C796.4 426.2 800.7 427.7 805.4 429.0C810.1 430.3 815.0 431.3 820.0 432.2C825.0 433.1 831.6 433.5 835.7 434.3C839.9 435.1 843.4 436.6 844.9 437.1L847.0 455.0L946.0 447.0L990.0 450.0L984.9 430.4C985.2 428.6 986.5 423.4 986.6 419.5C986.7 415.6 987.0 411.2 985.7 407.0C984.4 402.8 982.4 398.7 978.6 394.5C974.8 390.3 970.8 386.8 963.0 382.0C955.2 377.2 942.2 370.0 931.8 365.6C921.4 361.2 910.9 358.0 900.5 355.4C890.1 352.8 878.0 351.2 869.3 350.0C860.5 348.8 851.5 348.3 848.0 348.0L800.0 335.0L771.0 345.0z" fill="#cbbb49" filter="url(#b2)"/>
<path d="M743.1 364.8C746.1 364.0 755.0 360.6 761.1 359.8C767.2 359.0 772.5 358.9 779.8 359.8C787.1 360.7 796.4 363.3 804.7 365.4C813.0 367.5 819.2 369.7 829.6 372.3C840.0 374.9 855.2 378.1 866.9 381.0C878.6 383.9 889.5 386.7 900.0 389.7C910.5 392.7 921.7 395.9 930.0 399.0C938.3 402.1 944.7 405.2 950.0 408.0C955.3 410.8 960.0 414.7 962.0 416.0L985.0 430.0L985.7 407.0C984.5 404.9 982.4 398.7 978.6 394.5C974.8 390.3 970.8 386.8 963.0 382.0C955.2 377.2 942.2 370.0 931.8 365.6C921.4 361.2 910.9 358.0 900.5 355.4C890.1 352.8 878.0 351.2 869.3 350.0C860.5 348.8 854.8 348.8 848.0 348.0C841.2 347.2 832.0 345.8 828.8 345.4L800.0 335.0L760.0 340.0z" fill="#bcad3c" filter="url(#b1)"/>
<path d="M800.0 353.9C805.0 354.5 819.8 356.5 830.0 357.6C840.2 358.8 850.7 359.4 861.0 360.8C871.3 362.3 881.5 363.6 892.0 366.2C902.5 368.8 913.5 372.0 924.0 376.3C934.5 380.7 948.0 386.1 955.0 392.3C962.0 398.4 964.2 409.8 966.0 413.4" stroke="#b1a236" stroke-width="2.2" fill="none" opacity=".75"/>
<path d="M800.0 359.0C805.0 359.5 819.8 361.2 830.0 362.3C840.2 363.4 850.7 364.1 861.0 365.5C871.3 367.0 881.5 368.4 892.0 371.0C902.5 373.5 913.5 376.8 924.0 380.9C934.5 385.1 948.0 390.5 955.0 396.0C962.0 401.5 964.2 411.0 966.0 414.0" stroke="#c9ba47" stroke-width="2.0" fill="none" opacity=".75"/>
<path d="M800.0 363.6C805.0 364.1 819.8 365.5 830.0 366.6C840.2 367.6 850.7 368.3 861.0 369.8C871.3 371.2 881.5 372.6 892.0 375.2C902.5 377.8 913.5 381.0 924.0 385.1C934.5 389.1 948.0 394.5 955.0 399.4C962.0 404.3 964.2 412.0 966.0 414.5" stroke="#afa035" stroke-width="2.6" fill="none" opacity=".75"/>
<path d="M800.0 368.6C805.0 369.1 819.8 370.3 830.0 371.2C840.2 372.2 850.7 373.0 861.0 374.4C871.3 375.9 881.5 377.4 892.0 379.9C902.5 382.5 913.5 385.8 924.0 389.6C934.5 393.5 948.0 398.9 955.0 403.2C962.0 407.4 964.2 413.1 966.0 415.1" stroke="#c8b946" stroke-width="1.8" fill="none" opacity=".75"/>
<path d="M800.0 372.7C805.0 373.1 819.8 374.1 830.0 375.0C840.2 375.9 850.7 376.8 861.0 378.2C871.3 379.7 881.5 381.2 892.0 383.7C902.5 386.2 913.5 389.5 924.0 393.3C934.5 397.0 948.0 402.5 955.0 406.2C962.0 409.9 964.2 414.0 966.0 415.6" stroke="#b4a538" stroke-width="2.0" fill="none" opacity=".75"/>
<path d="M735.5 378.5L737.0 376.0L838.0 434.5z" fill="#b9aa3b"/>
<path d="M745.5 370.0L749.5 367.5L838.0 434.5z" fill="#b7a83a"/>
<path d="M762.0 362.2L771.0 359.8L838.0 434.5z" fill="#b8a93b"/>
<path d="M788.0 361.0L797.0 363.0L838.0 434.5z" fill="#c0b140"/>
<path d="M785.0 421.5C786.2 422.0 788.6 423.2 792.0 424.5C795.4 425.8 800.7 427.7 805.4 429.0C810.1 430.3 815.0 431.2 820.0 432.2C825.0 433.2 831.7 434.0 835.7 434.8C839.7 435.6 842.6 436.5 844.0 436.8" stroke="url(#grim)" stroke-width="1.6" fill="none"/>
<ellipse cx="821" cy="446.500" rx="10" ry="2.600" fill="#c6b654" filter="url(#b1)" transform="rotate(11 821 446.5)"/>
<path d="M753.6 336.8C756.9 334.7 761.2 334.3 766.0 334.0C770.8 333.7 776.7 333.3 782.3 334.9C787.9 336.5 793.9 340.6 799.7 343.6C805.5 346.6 812.1 351.0 817.1 353.0C822.1 355.0 824.1 354.8 829.6 355.5C835.1 356.2 840.8 355.8 850.0 357.5C859.2 359.2 885.0 363.4 885.0 366.0C885.0 368.6 859.2 371.9 850.0 373.0C840.8 374.1 837.1 373.6 829.6 372.3C822.1 371.0 813.0 367.5 804.7 365.4C796.4 363.3 787.1 360.7 779.8 359.8C772.5 358.9 767.2 358.9 761.1 359.8C755.0 360.8 746.3 366.1 743.1 365.5C739.9 364.9 741.5 359.1 742.0 356.0C742.5 352.9 744.3 350.0 746.2 346.8C748.1 343.6 750.3 338.9 753.6 336.8z" fill="url(#gneck)" filter="url(#b1)"/>
<path d="M955.0 390.0C957.6 392.1 966.8 398.3 970.6 402.5C974.4 406.7 976.4 410.8 977.7 415.0C979.0 419.2 978.7 423.6 978.6 427.5C978.5 431.4 977.2 436.6 976.9 438.4L945.6 429.5L945.6 430.3C947.2 429.4 952.1 427.8 955.0 425.2C957.9 422.6 961.3 418.5 962.8 415.0C964.3 411.5 965.3 408.2 964.0 404.0C962.7 399.8 956.5 392.3 955.0 390.0z" fill="url(#grw)" filter="url(#b1)"/>
</g>
<path d="M753.6 336.8C756.9 334.7 761.2 334.3 766.0 334.0C770.8 333.7 776.7 333.3 782.3 334.9C787.9 336.5 794.8 341.0 799.7 343.6C804.7 346.2 812.0 349.1 812.0 350.5C812.0 351.9 806.2 351.1 800.0 352.0C793.8 352.9 783.3 354.3 775.0 356.0C766.7 357.7 755.2 360.6 750.0 362.0C744.8 363.4 744.8 365.5 743.5 364.5C742.2 363.5 741.5 358.9 742.0 356.0C742.5 353.1 744.3 350.0 746.2 346.8C748.1 343.6 750.3 338.9 753.6 336.8z" fill="url(#gneck)"/>
<path d="M844.9 437.1L945.6 429.5L1099.4 477.6L823.0 497.6z" fill="#cbbb49"/>
<path d="M859.7 435.3L955 424.4" stroke="#b3a53a" stroke-width="1" stroke-dasharray="5 2" fill="none"/>
<path d="M809.8 465.6L824.5 466.5L812.5 499.8L805.4 517.1L800.5 534.7z" fill="#a89a31"/>
<path d="M844.9 437.1L838.0 453.0L827.7 488.0L823.0 497.6L812.0 517.0L801.5 533.5L805.4 517.1L812.0 499.8L823.8 466.0L830.3 449.0z" fill="url(#gfil)"/>
<path d="M823.0 497.6L1099.4 478.1C1102.0 478.5 1110.3 478.9 1115.0 480.2C1119.7 481.4 1124.2 483.5 1127.5 485.6C1130.8 487.7 1133.2 490.5 1134.5 492.7C1135.8 494.9 1135.0 497.1 1135.0 499.0C1135.0 500.9 1134.8 502.5 1134.5 504.4C1134.2 506.3 1133.2 509.3 1133.0 510.3L802.4 534.3z" fill="url(#gbev)"/>
<g fill="none" stroke-linejoin="round"><path d="M822 389.600H836.500" stroke="#f00" stroke-width="3"/><path d="M836 385.600L844 389.800L836 390.800z" stroke="#f00" stroke-width="1.200" fill="#e02010" fill-opacity=".55"/><path d="M820.800 389.600L811.500 381.700L809.200 382L810.800 384.200L819.300 390.300" stroke="#10e818" stroke-width="1.500"/><path d="M821.800 390.500V380.500" stroke="#0808e8" stroke-width="2.200"/><path d="M822 381L823.900 367.200L827.200 373.400L824.700 377.500L824.500 387.500" stroke="#0808e8" stroke-width="1.300"/></g>
</g>
<!--MODEL-END-->
</svg>
</div>

<!-- status bar -->
<div class="abs" style="left:0;top:707px;width:1366px;height:2px;background:#fff"></div>
<div id="statusbar" class="abs">
<i class="sp" style="left:1023px;width:66px"></i><i class="sp" style="left:1092px;width:66px"></i><i class="sp" style="left:1161px;width:60px"></i><i class="sp" style="left:1224px;width:70px"></i><i class="sp" style="left:1297px;width:69px"></i>
</div>

<!-- taskbar -->
<div id="taskbar" class="abs">
<div class="abs" style="left:462px;top:0;width:48px;height:40px;background:#2b2e33"></div>
<div class="abs" style="left:506px;top:0;width:4px;height:40px;background:#1d2025"></div>
<i class="ul" style="left:172px"></i><i class="ul2" style="left:204px"></i>
<i class="ul" style="left:462px;width:48px"></i><i class="ul2" style="left:505px;width:5px"></i>
<i class="ul" style="left:515px"></i><i class="ul" style="left:564px"></i><i class="ul" style="left:613px"></i><i class="ul2" style="left:645px"></i><i class="ul" style="left:662px"></i><i class="ul" style="left:711px"></i>
<svg class="abs" style="left:0;top:0" width="1366" height="40" viewBox="0 728 1366 40">
<!-- start -->
<path d="M16 742.300l6.500-.900v6.300h-6.500zM23.300 741.300l8.700-1.300v7.700h-8.700zM16 748.500h6.500v6.300l-6.500-.900zM23.300 748.500h8.700v7.700l-8.700-1.300z" fill="#fff"/>
<circle cx="72" cy="748" r="6.800" fill="none" stroke="#fff" stroke-width="2"/>

<!-- tray -->
<g fill="none" stroke="#fff">
<path d="M1159 750.900l6-6l6 6" stroke-width="1.300"/>
<path d="M1184.200 754.500a11.300 11.300 0 0 1 11.300-11.300M1187.500 754.500a8 8 0 0 1 8-8M1190.800 754.500a4.700 4.700 0 0 1 4.700-4.700" stroke-width="1.200"/>
<rect x="1206.500" y="744.500" width="13" height="8" stroke-width="1"/><path d="M1220.500 746.500v4" stroke-width="1.400"/>
<path d="M1229.500 746.500h2.500l3-3.800v12.600l-3-3.800h-2.500z" stroke-width="1"/>
<path d="M1237.300 746a4 4 0 0 1 0 5.600M1239.800 743.500a7.500 7.500 0 0 1 0 10.600M1242.500 741.200a11 11 0 0 1 0 15" stroke-width="1.100"/>
</g>
<circle cx="1194.400" cy="753.600" r="1.500" fill="#fff"/>
<rect x="1208" y="746" width="6" height="5" fill="#fff"/>
<!-- action center -->
<path d="M1325.500 740.500h15v12h-5.500l-2.500 3v-3h-7z" fill="#fff"/>
<path d="M1328 744h10M1328 746.500h10M1328 749h6" stroke="#0b0e14" stroke-width="1"/>
<!-- onedrive cloud -->
<path d="M1004.800 748.200a3.200 3.200 0 0 1 .4-6.300a3.800 3.800 0 0 1 5-2.400a4.600 4.600 0 0 1 7.200 2.600a3.100 3.100 0 0 1-1 6.100z" fill="#0a72d8"/>
<path d="M1007 748.200a2.600 2.600 0 0 1 .8-5a3.300 3.300 0 0 1 6-1" fill="none" stroke="#0b0e14" stroke-width=".8" opacity=".6"/>
<!-- edge -->
<path d="M133.300 746.500c1-5.500 5.300-9.300 10.300-9.300c5.600 0 9.300 4 9.300 9.500v2.300h-13.300c.3 3.300 2.800 5.300 6.300 5.300c2.400 0 4.500-.6 6.300-1.700v4.200c-2 1-4.400 1.500-7 1.500c-6.500 0-10.600-4-10.600-9.700c0-3.200 1.600-6 4.200-7.500c-2.800 1.200-4.600 3.200-5.500 5.400zM139.700 745.300h8c0-2.700-1.500-4.300-3.800-4.300c-2.200 0-3.800 1.700-4.200 4.300z" fill="#0a7ad8"/>
<!-- explorer -->
<path d="M181.500 740.200h6.500l1.500 1.600h12.700v15h-20.700z" fill="#f5c750"/>
<path d="M181.500 742.600h20.700v14.200h-20.700z" fill="#ffe9a0"/>
<rect x="182.800" y="740.600" width="4" height="1" fill="#7ac0e8"/>
<path d="M185.200 757v-8.300h13.800v8.300h-3.600v-4.800h-6.600v4.800z" fill="#3aa8ea"/>
<path d="M185.200 748.700h13.800v1.600h-13.800z" fill="#2b90d8"/>
<!-- store -->
<path d="M230 741l20.700-.5v19.200l-20.700-2.700z" fill="#fff"/>
<path d="M235.500 741c0-3 2-5 4.800-5s4.800 2 4.800 5" fill="none" stroke="#fff" stroke-width="1.300"/>
<path d="M233.200 745.400l4.800-.4v4.300h-4.800zM239 744.900l5.800-.5v4.900h-5.800zM233.200 750.300h4.800v4.300l-4.800-.6zM239 750.300h5.800v5.100l-5.800-.7z" fill="#0b0e14"/>
<!-- osk -->
<defs><linearGradient id="mon" x1="0" y1="0" x2="1" y2="1"><stop offset="0" stop-color="#1030c0"/><stop offset=".6" stop-color="#3468e0"/><stop offset="1" stop-color="#9cc4f8"/></linearGradient></defs>
<path d="M282.500 736.500l18.300 1.500l-1.500 14.500l-15.500-1.300z" fill="url(#mon)" stroke="#b8c8e0" stroke-width=".8"/>
<ellipse cx="290.500" cy="756.300" rx="6.300" ry="2.300" fill="#c8c8c8"/><path d="M289 752.500h4l.5 3h-5z" fill="#a8a8a8"/>
<path d="M278 741l17.200 1l-.6 6.300l-16.600-.9z" fill="#a4d4f4" stroke="#5a9ad8" stroke-width=".6"/>
<path d="M279.500 743.200l14.300.8M279.500 745.600l14.300.8" stroke="#2c6cc8" stroke-width="1.100" stroke-dasharray="1.500 1"/>
<!-- apps grid -->
<rect x="328" y="736" width="22" height="22.700" rx="1.500" fill="#f4f4f4"/>
<g><rect x="333" y="741" width="3" height="3" fill="#e8382c"/><rect x="337.600" y="741" width="3" height="3" fill="#e8382c"/><rect x="342.200" y="741" width="3" height="3" fill="#e8382c"/>
<rect x="333" y="745.600" width="3" height="3" fill="#2ca84c"/><rect x="337.600" y="745.600" width="3" height="3" fill="#3880f0"/><rect x="342.200" y="745.600" width="3" height="3" fill="#f8b400"/>
<rect x="333" y="750.200" width="3" height="3" fill="#2ca84c"/><rect x="337.600" y="750.200" width="3" height="3" fill="#f8b400"/><rect x="342.200" y="750.200" width="3" height="3" fill="#f8b400"/></g>
<!-- chrome -->
<circle cx="388" cy="747.800" r="11" fill="#dd4b3e"/>
<path d="M388 747.800L378.500 742.300A11 11 0 0 0 385.500 758.500L390.500 751z" fill="#1aa260"/>
<path d="M388 747.800L385.500 758.500A11 11 0 0 0 397.500 742.300H388z" fill="#ffce44"/>
<path d="M378.500 742.300A11 11 0 0 1 397.500 742.300H388z" fill="#dd4b3e"/>
<circle cx="388" cy="747.800" r="5" fill="#fff"/><circle cx="388" cy="747.800" r="4" fill="#4c8bf5"/>
<!-- arduino -->
<circle cx="436.800" cy="748" r="11" fill="#00979c"/>
<path d="M436.800 748c-1.500-2-2.800-3-4.600-3a3 3 0 0 0 0 6c1.800 0 3.100-1 4.600-3c1.500-2 2.800-3 4.600-3a3 3 0 0 1 0 6c-1.800 0-3.100-1-4.600-3z" fill="none" stroke="#fff" stroke-width="1.500"/>
<path d="M431 748h2.400M440.200 748h2.400M441.400 746.800v2.400" stroke="#fff" stroke-width=".9"/>

<!-- artcam -->
<defs><linearGradient id="acb" x1="0" y1="0" x2="0" y2="1"><stop offset="0" stop-color="#30a8ff"/><stop offset="1" stop-color="#0858c8"/></linearGradient><linearGradient id="acp" x1="0" y1="0" x2="1" y2="0"><stop offset="0" stop-color="#78007c"/><stop offset=".5" stop-color="#e040e0"/><stop offset="1" stop-color="#88008c"/></linearGradient>
<radialGradient id="ffg" cx=".55" cy=".4" r=".6"><stop offset="0" stop-color="#2a7ad8"/><stop offset="1" stop-color="#0a2470"/></radialGradient>
<linearGradient id="ffo" x1="0" y1="0" x2="0" y2="1"><stop offset="0" stop-color="#f88a1c"/><stop offset="1" stop-color="#d83c10"/></linearGradient>
<linearGradient id="ieb" x1="0" y1="0" x2="0" y2="1"><stop offset="0" stop-color="#58c8f8"/><stop offset="1" stop-color="#1880d0"/></linearGradient>
<linearGradient id="ppo" x1="0" y1="0" x2="1" y2="1"><stop offset="0" stop-color="#f8a060"/><stop offset="1" stop-color="#e04c08"/></linearGradient></defs>
<path d="M478 737.500q0-1.500 1.500-1.500h5q1.500 0 1.500 1.500v13h-8zM476.500 754h10.500v3h-10.500zM474.500 757h14v2.600h-14z" fill="url(#acb)"/>
<rect x="480" y="737.300" width="4" height="7.500" rx="1.800" fill="#b4bcc4"/><path d="M481.500 744.800h1v3.200h-1z" fill="#8a9098"/>
<rect x="474" y="751" width="13" height="2.300" fill="#c8ccd0"/>
<path d="M485.500 759.500L492.300 736.200L494.300 736L496.600 759.600L493.600 759.600L493.200 753L490 753.600L488.600 759.600z M490.700 750.600L493 750.200L492.400 742.500z" fill="url(#acp)" fill-rule="evenodd"/>
<!-- eagle -->
<rect x="523" y="735.800" width="24" height="24" fill="#fff"/>
<path d="M538 737.200c-6-1.200-11.500 2.800-11.500 8.300c0 3.800 2.400 6.600 6 7.600c-1.600-2-2-4.200-.8-6c-1.600-1.200-1.500-3.800.6-5.600c1.600-1.500 3.800-2 5.600-1.500c-.6-1 .1-2.200 .1-2.800z" fill="#d8102c"/>
<text x="533.600" y="752.600" font-family="'Liberation Sans',Arial,sans-serif" font-size="8.200" fill="#5a5a5a" letter-spacing="-.5">CS</text>
<text x="526.200" y="758.800" font-family="'Liberation Sans',Arial,sans-serif" font-size="5.300" font-weight="bold" fill="#111" letter-spacing="-.1">EAGLE</text>
<!-- ppt -->
<path d="M572.500 737.500q8-2 19-1v16.500l-18.500 2.500z" fill="url(#ppo)" stroke="#f8c8a0" stroke-width=".8"/>
<path d="M575 743.200l19.800-1.600l-1 14l-16.500 1.800z" fill="#e85810" stroke="#fff" stroke-width="1"/>
<path d="M578.500 747h5M578.500 749.500h5M578.800 752h4" stroke="#fff" stroke-width="1.200"/><circle cx="588.600" cy="749.300" r="3" fill="#fff"/><path d="M588.600 749.300v-3a3 3 0 0 1 3 3z" fill="#f8a060"/>
<!-- firefox -->
<circle cx="633.300" cy="747" r="10" fill="url(#ffg)"/>
<path d="M622.300 744c-1.500 6.500 2.500 13.600 10.400 14.600c6.600 .6 11.500-4.400 11.200-11c-.1-3-1.200-5.400-2.800-7c1.200 3.600 .6 7.400-1.800 9.800c-2.600 2.600-6.800 2.500-8.600.4c2 .3 3.600-.6 4.300-1.800c-1.800.2-3.400-.4-4.400-1.800c-1-1.500-.5-3 .8-3.800c-1.400-.8-2-2-1.700-3.200c-1.600.3-2.800-.8-2.900-2.500c-2.300 1.300-3.900 3.600-4.500 6.300z" fill="url(#ffo)"/>
<path d="M641.500 740.500c2 2.400 2.800 5.500 2.200 8.800c-.5 2.800-2 5.200-4.200 6.800c1.800-2.600 2.600-5.400 2.600-8.600c0-2.600-.2-4.800-.6-7z" fill="#f8c830"/>
<!-- telegram -->
<circle cx="681.900" cy="747.600" r="10.800" fill="#2ca4dc"/>
<path d="M675.200 747.600l13-5.200c.7-.3 1.200.2 1 1l-2.200 10.200c-.2.800-.7 1-1.300.6l-3.300-2.500l-1.700 1.600c-.3.300-.6.200-.6-.3l.2-2.800l5.800-5.200l-7.300 4.500l-3.200-1c-.8-.3-.8-.7-.4-.9z" fill="#fff"/>
<path d="M680.300 750.200l5.800-5.200l-5.400 6.300l-.4 2.300z" fill="#c8daea"/>
<!-- IE -->
<path d="M722.800 749c0-6 4-10.500 9.700-10.500c5.400 0 9 4 9 9.600v1.800h-13.200c.3 2.800 2.300 4.400 5.300 4.400c2.600 0 5-.8 7-2.200v3.800c-2 1.200-4.600 1.800-7.600 1.800c-6.400 0-10.200-3.700-10.200-8.700zM728.400 746.600h8.200c-.1-2.800-1.600-4.500-4-4.500c-2.300 0-3.900 1.800-4.200 4.500z" fill="url(#ieb)"/>
<path d="M721 757.300c-1.500-3 .8-9 6.500-14.500c5.600-5.300 11.600-7.600 13.400-5.600" fill="none" stroke="#f4b800" stroke-width="1.600"/>
<path d="M102.500 740v16M105.500 740v16M938.500 740v16M941.500 740v16M1108.500 740v16M1111.500 740v16" stroke="#5a5d62" stroke-width="1"/>
</svg>
<div class="t w" style="left:952px;top:14px;font-size:12px">Desktop</div>
<div class="t w" style="left:1022.500px;top:9px;font-size:11.600px">OneDrive</div>
<div class="t w" style="left:1086px;top:3px;font-size:11px">&#187;</div>
<div class="t w" style="left:1122.500px;top:14px;font-size:12px;letter-spacing:-.1px">Links</div>
<div class="t w" style="left:1260px;top:5px;font-size:12px;letter-spacing:-.2px">4:40 PM</div>
<div class="t w" style="left:1255.500px;top:23px;font-size:12px;letter-spacing:-.2px">5/10/2017</div>
</div>
</body>
</html>
